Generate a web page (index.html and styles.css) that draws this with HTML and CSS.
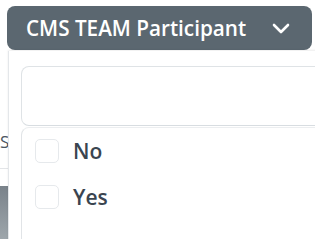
FILE: index.html
```html
<!DOCTYPE html>
<html lang="en">
<head>
    <meta charset="UTF-8">
    <meta name="viewport" content="width=device-width, initial-scale=1.0">
    <title>CMS TEAM Participant filter</title>
    <link rel="stylesheet" href="styles.css">
</head>
<body>
    <div class="filter">
        <button class="filter-toggle" type="button">
            <span>CMS TEAM Participant</span>
            <svg class="chevron" width="18" height="11" viewBox="0 0 18 11" aria-hidden="true">
                <path d="M2 2 L9 9 L16 2" fill="none" stroke="#fff" stroke-width="2.6" stroke-linecap="round" stroke-linejoin="round"/>
            </svg>
        </button>

        <!-- page content behind the open menu -->
        <div class="backdrop">
            <p class="backdrop-label">Status</p>
            <hr>
            <div class="backdrop-image"></div>
        </div>

        <div class="filter-menu">
            <input class="filter-search" type="text" aria-label="Search">
            <ul class="filter-options">
                <li><span class="check"></span>No</li>
                <li><span class="check"></span>Yes</li>
            </ul>
        </div>
    </div>
</body>
</html>
```

FILE: styles.css
```css
body {
    margin: 0;
    background: #fff;
    font-family: "Open Sans", "Noto Sans", sans-serif;
    overflow: hidden;
}
.filter {
    position: relative;
    padding: 6px 0 0 7px;
}
.filter-toggle {
    display: flex;
    align-items: center;
    justify-content: space-between;
    width: 305px;
    height: 44px;
    padding: 0 22px 0 19px;
    background-color: #5b6770;
    color: #fff;
    border: none;
    border-radius: 8px;
    font-family: inherit;
    font-size: 20.7px;
    font-weight: 600;
}
.chevron {
    display: block;
}
.backdrop {
    width: 9px;
    margin-left: -7px;
    overflow: hidden;
}
.backdrop-label {
    margin: 80px 0 0;
    font-size: 17px;
    line-height: 24px;
    color: #4b5661;
    white-space: nowrap;
}
.backdrop hr {
    margin: 14px 0 0;
    border: 0;
    border-top: 1px solid #e3e5e8;
}
.backdrop-image {
    height: 60px;
    margin-top: 17px;
    background: linear-gradient(#79828a, #a3abb0);
}
.filter-menu {
    position: absolute;
    top: 51px;
    left: 8px;
    width: 330px;
    height: 200px;
    padding: 15px 0 0 12px;
    background: #fff;
    border-left: 1px solid #e4e7ea;
    box-shadow: 0 -1px 2px rgba(0, 0, 0, 0.08);
}
.filter-search {
    display: block;
    width: 100%;
    height: 60px;
    margin: 0;
    border: 1px solid #dfe3e6;
    border-bottom-color: #d8dde1;
    border-radius: 8px;
    box-sizing: border-box;
}
.filter-options {
    list-style: none;
    margin: 1px 0 0;
    padding: 11px 0 0 13px;
    height: 200px;
    border-left: 1px solid #e1e4e7;
    border-top: 1px solid #eceef0;
    border-top-left-radius: 8px;
}
.filter-options li {
    display: flex;
    align-items: center;
    gap: 14px;
    height: 24px;
    margin-bottom: 22px;
    font-size: 21px;
    font-weight: 600;
    color: #3a4550;
}
.check {
    flex: none;
    width: 24px;
    height: 24px;
    box-sizing: border-box;
    border: 1px solid #e6e9ec;
    border-radius: 5px;
}
```
